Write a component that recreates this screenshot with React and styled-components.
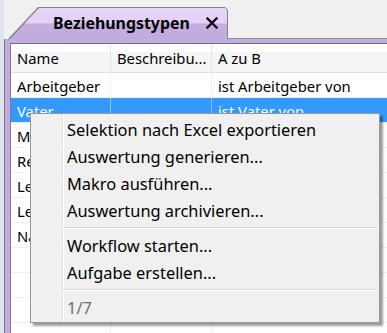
import React from 'react'
import styled, { createGlobalStyle } from 'styled-components'

const GlobalStyle = createGlobalStyle`
  html, body {
    margin: 0;
    padding: 0;
    background: #f0f0f0;
  }
  body {
    font-family: "Noto Sans", "Open Sans", sans-serif;
    color: #000;
  }
`

const Page = styled.div`
  position: relative;
  width: 387px;
  height: 333px;
  overflow: hidden;
  display: flex;
  flex-direction: column;
  background: linear-gradient(to right, #dfe5ee 0, #dfe5ee 4px, #f0f0f0 4px);
`

const TabStrip = styled.div`
  display: flex;
  align-items: flex-end;
  height: 39px;
  padding-left: 8px;
`

const TabBorder = styled.div`
  width: 220px;
  height: 32px;
  background: #858585;
  clip-path: polygon(30px 0, calc(100% - 3px) 0, 100% 3px, 100% 100%, 0 100%);
  padding: 1px 1px 0 1px;
  box-sizing: border-box;
`

const TabFace = styled.div`
  height: 100%;
  display: flex;
  align-items: center;
  padding-left: 44px;
  gap: 16px;
  box-sizing: border-box;
  background: linear-gradient(to bottom, #e6d6f8 0, #e3d1f6 15px, #c4aee0 16px, #c1aadd 100%);
  clip-path: polygon(30px 0, calc(100% - 2px) 0, 100% 2px, 100% 100%, 1px 100%);
`

const TabTitle = styled.span`
  font-weight: 700;
  font-size: 15.9px;
  line-height: 20px;
  margin-top: -2px;
`

const CloseIcon = styled.svg`
  width: 12px;
  height: 12px;
  margin-top: -2px;
`

const StripFiller = styled.div`
  flex: 1;
  align-self: stretch;
  border-bottom: 1px solid #8f8f8f;
`

const Frame = styled.div`
  flex: 1;
  margin-left: 4px;
  border-left: 1px solid #7d7d7d;
  background: #c3acdf;
  padding: 4px 0 0 5px;
  display: flex;
  min-height: 0;
`

const Content = styled.div`
  flex: 1;
  background: #fff;
  border-top: 1px solid #6e6e6e;
  border-left: 1px solid #7d7d7d;
  box-shadow: inset 1px 0 0 #c8c8c8;
  display: flex;
  flex-direction: column;
  overflow: hidden;
`

const Grid = styled.div`
  display: grid;
  grid-template-columns: 100px 101px 1fr;
  grid-template-rows: 29px;
  grid-auto-rows: 25px;
`

const HeadCell = styled.div`
  display: flex;
  align-items: center;
  padding-left: 6px;
  font-size: 14.8px;
  background: linear-gradient(to bottom, #ffffff 0, #ffffff 8px, #f4f5f7 8px);
  border-bottom: 1px solid #e1e1e1;
  border-right: ${p => (p.$last ? 'none' : '1px solid #e4e4e4')};
  box-sizing: border-box;
  white-space: nowrap;
  overflow: hidden;
`

const Cell = styled.div`
  display: flex;
  align-items: center;
  padding-left: 6px;
  padding-top: 1px;
  font-size: 14.8px;
  box-sizing: border-box;
  white-space: nowrap;
  overflow: hidden;
  border-bottom: 1px solid #f0f0f0;
  border-right: ${p => (p.$last ? 'none' : `1px solid ${p.$selected ? '#8fc3f8' : '#f0f0f0'}`)};
  background: ${p => (p.$selected ? '#3399ff' : '#fff')};
  color: ${p => (p.$selected ? '#fff' : '#000')};
`

const Menu = styled.div`
  position: absolute;
  left: 30px;
  top: 113px;
  width: 350px;
  box-sizing: border-box;
  padding: 2px 2px 1px 0;
  background: linear-gradient(to right, transparent 31px, #e2e2e2 31px, #e2e2e2 32px, #ffffff 32px, #ffffff 33px, transparent 33px), #f0f0f0;
  border: 1px solid #979797;
  box-shadow: 3px 3px 2px rgba(0, 0, 0, 0.38);
  display: flex;
  flex-direction: column;
`

const MenuItem = styled.div`
  height: 27px;
  display: flex;
  align-items: center;
  padding-left: 36px;
  font-size: 16.4px;
  color: ${p => (p.$disabled ? '#6d6d6d' : '#000')};
  white-space: nowrap;
`

const MenuSeparator = styled.div`
  height: 8px;
  margin-left: 32px;
  display: flex;
  align-items: center;

  &::before {
    content: '';
    flex: 1;
    height: 0;
    border-top: 1px solid #d7d7d7;
    border-bottom: 1px solid #ffffff;
  }
`

const columns = ['Name', 'Beschreibu...', 'A zu B']

const rows = [
  ['Arbeitgeber', '', 'ist Arbeitgeber von'],
  ['Vater', '', 'ist Vater von'],
  ['Mutter', '', 'ist Mutter von'],
  ['Referent', '', 'ist Referent von'],
  ['Lehrer', '', 'ist Lehrer von'],
  ['Leiter', '', 'ist Leiter von'],
  ['Nachbar', '', 'ist Nachbar von'],
  ['', '', ''],
  ['', '', ''],
  ['', '', ''],
  ['', '', '']
]

const menuGroups = [
  ['Selektion nach Excel exportieren', 'Auswertung generieren...', 'Makro ausführen...', 'Auswertung archivieren...'],
  ['Workflow starten...', 'Aufgabe erstellen...']
]

export default function App () {
  return (
    <Page>
      <GlobalStyle />
      <TabStrip>
        <TabBorder>
          <TabFace>
            <TabTitle>Beziehungstypen</TabTitle>
            <CloseIcon viewBox="0 0 12 12">
              <path d="M1.5 1.5 L10.5 10.5 M10.5 1.5 L1.5 10.5" stroke="#111" strokeWidth="2.4" strokeLinecap="square" />
            </CloseIcon>
          </TabFace>
        </TabBorder>
        <StripFiller />
      </TabStrip>
      <Frame>
        <Content>
          <Grid>
            {columns.map((c, i) => (
              <HeadCell key={c} $last={i === 2}>{c}</HeadCell>
            ))}
            {rows.map((r, ri) => r.map((v, ci) => (
              <Cell key={`${ri}-${ci}`} $selected={ri === 1} $last={ci === 2}>{v}</Cell>
            )))}
          </Grid>
        </Content>
      </Frame>
      <Menu>
        {menuGroups.map((g, gi) => (
          <React.Fragment key={gi}>
            {g.map(item => <MenuItem key={item}>{item}</MenuItem>)}
            <MenuSeparator />
          </React.Fragment>
        ))}
        <MenuItem $disabled>1/7</MenuItem>
      </Menu>
    </Page>
  )
}
